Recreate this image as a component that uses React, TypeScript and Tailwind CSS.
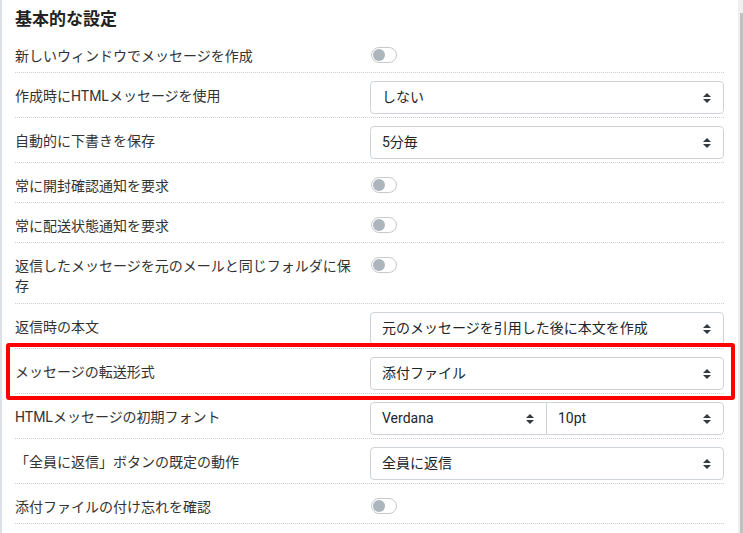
type Setting = {
  label: string;
  kind: "toggle" | "select" | "font";
  value?: string;
  twoLines?: boolean;
};

const settings: Setting[] = [
  { label: "新しいウィンドウでメッセージを作成", kind: "toggle" },
  { label: "作成時にHTMLメッセージを使用", kind: "select", value: "しない" },
  { label: "自動的に下書きを保存", kind: "select", value: "5分毎" },
  { label: "常に開封確認通知を要求", kind: "toggle" },
  { label: "常に配送状態通知を要求", kind: "toggle" },
  { label: "返信したメッセージを元のメールと同じフォルダに保存", kind: "toggle", twoLines: true },
  { label: "返信時の本文", kind: "select", value: "元のメッセージを引用した後に本文を作成" },
  { label: "メッセージの転送形式", kind: "select", value: "添付ファイル" },
  { label: "HTMLメッセージの初期フォント", kind: "font" },
  { label: "「全員に返信」ボタンの既定の動作", kind: "select", value: "全員に返信" },
  { label: "添付ファイルの付け忘れを確認", kind: "toggle" },
];

// up/down arrows like the bootstrap custom-select
function Arrows() {
  return (
    <svg width="8" height="10" viewBox="0 0 4 5" className="shrink-0">
      <path fill="#343a40" d="M2 0L0 2h4zm0 5L0 3h4z" />
    </svg>
  );
}

function Select({ value, className = "rounded" }: { value: string; className?: string }) {
  return (
    <div
      className={`flex h-[33px] items-center justify-between border border-[#ced4da] bg-white pl-[11px] pr-[12px] text-[14px] text-[#212529] ${className}`}
    >
      <span>{value}</span>
      <Arrows />
    </div>
  );
}

function Toggle() {
  return (
    <div className="ml-[1px] flex h-[16px] w-[26px] items-center rounded-full border border-[#c6cacf] bg-white">
      <div className="ml-[1px] h-[12px] w-[12px] rounded-full bg-[#adb5bd]" />
    </div>
  );
}

export default function App() {
  return (
    <div
      className="flex h-[533px] w-[743px] overflow-hidden bg-white"
      style={{ fontFamily: 'Roboto, "Noto Sans CJK JP", sans-serif' }}
    >
      <div className="relative flex-1 border-l-2 border-[#dde1e6] pl-[13px] pr-[14px]">
        <h2 className="h-[33px] pt-[7px] text-[17px] font-bold leading-[24px] text-[#222]">
          基本的な設定
        </h2>
        {settings.map((s, i) => (
          <div
            key={i}
            className="grid grid-cols-[355px_1fr] border-b border-dotted border-[#cfcfcf]"
          >
            <div
              className={`pr-[15px] pt-[13px] text-[14px] leading-5 text-[#333] ${
                s.twoLines ? "pb-[7px]" : "pb-[6px]"
              }`}
            >
              {s.label}
            </div>
            {s.kind === "toggle" && (
              <div className="pt-[14px]">
                <Toggle />
              </div>
            )}
            {s.kind === "select" && (
              <div className="pb-[3px] pt-2">
                <Select value={s.value!} />
              </div>
            )}
            {s.kind === "font" && (
              <div className="grid grid-cols-2 pb-[3px] pt-2">
                <Select value="Verdana" className="rounded-l" />
                <Select value="10pt" className="-ml-px rounded-r" />
              </div>
            )}
          </div>
        ))}
        {/* highlight around the forwarding row */}
        <div className="pointer-events-none absolute left-[4px] top-[343px] h-[57px] w-[729px] rounded-[3px] border-4 border-[#ff0000]" />
      </div>
      <div className="flex w-[5px] justify-end bg-[#f0f0f0]">
        <div className="mt-[13px] w-[3px] bg-[#c1c1c1]" />
      </div>
    </div>
  );
}
